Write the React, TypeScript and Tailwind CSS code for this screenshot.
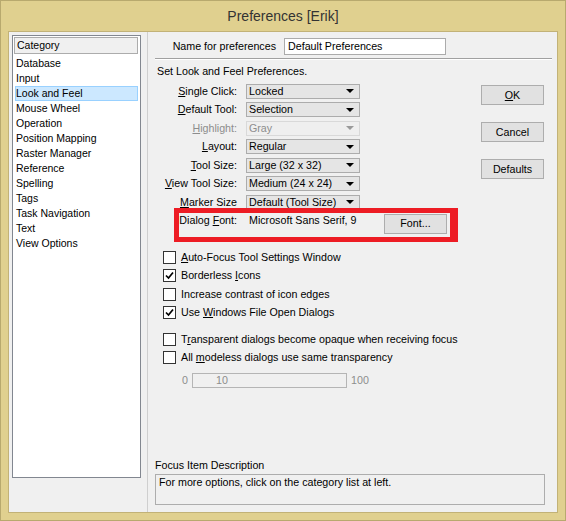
import type { ReactNode } from "react";

const categories = [
  "Database",
  "Input",
  "Look and Feel",
  "Mouse Wheel",
  "Operation",
  "Position Mapping",
  "Raster Manager",
  "Reference",
  "Spelling",
  "Tags",
  "Task Navigation",
  "Text",
  "View Options",
];

const U = ({ children }: { children: ReactNode }) => <span className="underline underline-offset-[1px]">{children}</span>;

const Arrow = ({ disabled }: { disabled?: boolean }) => (
  <svg width="8" height="4" viewBox="0 0 8 4">
    <polygon points="0,0 8,0 4,4" fill={disabled ? "#9a9a9a" : "#000"} />
  </svg>
);

const Select = ({ value, disabled }: { value: string; disabled?: boolean }) => (
  <div
    className={
      disabled
        ? "ml-[9px] flex h-[15px] w-[114px] items-center justify-between border border-[#d9d9d9] bg-[#efefef] pl-[2px] pr-[5px] text-[#8d8d8d]"
        : "ml-[9px] flex h-[15px] w-[114px] items-center justify-between border border-[#acacac] bg-[#e5e5e5] pl-[2px] pr-[5px]"
    }
  >
    <span>{value}</span>
    <Arrow disabled={disabled} />
  </div>
);

const FormRow = ({ label, value, disabled }: { label: ReactNode; value: string; disabled?: boolean }) => (
  <div className="flex h-[18.5px] items-center">
    <div className={disabled ? "w-[80px] text-right text-[#8d8d8d]" : "w-[80px] text-right"}>{label}</div>
    <Select value={value} disabled={disabled} />
  </div>
);

const Check = ({ checked, children }: { checked?: boolean; children: ReactNode }) => (
  <div className="ml-[6px] flex h-[18.5px] items-center">
    <div className="flex h-[13px] w-[13px] items-center justify-center border border-[#333] bg-white">
      {checked && (
        <svg width="11" height="11" viewBox="0 0 11 11">
          <path d="M2 5.5 L4.5 8 L9 2.5" stroke="#000" strokeWidth="1.7" fill="none" />
        </svg>
      )}
    </div>
    <span className="ml-[5px]">{children}</span>
  </div>
);

const Button = ({ children }: { children: ReactNode }) => (
  <div className="flex h-[20px] w-[63px] items-center justify-center border border-[#adadad] bg-[#e1e1e1]">
    {children}
  </div>
);

export default function App() {
  return (
    <div className="relative flex h-[521px] w-[566px] flex-col border border-[#b8a96e] bg-[#e0d08f] font-['Liberation_Sans',Arial,sans-serif] text-[10.7px] leading-[13px] text-black">
      <div className="flex h-[30px] items-center justify-center text-[14px] text-[#333]">Preferences [Erik]</div>

      <div className="mx-[7px] mb-[7px] flex flex-1 border border-[#c2b277] bg-[#f0f0f0]">
        {/* category list */}
        <div className="w-[138px]">
          <div className="ml-[3px] mt-[3px] h-[443px] w-[129px] border border-[#828790] bg-white">
            <div className="ml-px mt-px flex h-[17px] w-[124px] items-center border border-[#acacac] bg-[#f0f0f0] pl-[2px] text-[10.5px]">
              Category
            </div>
            <div className="mt-[1.5px] text-[10.5px]">
              {categories.map((c) => (
                <div
                  key={c}
                  className={
                    c === "Look and Feel"
                      ? "mx-[2px] flex h-[15px] items-center border border-[#99d1ff] bg-[#cce8ff]"
                      : "mx-[2px] flex h-[15px] items-center border border-transparent"
                  }
                >
                  {c}
                </div>
              ))}
            </div>
          </div>
        </div>
        <div className="w-px bg-[#cfcfcf]" />

        {/* settings */}
        <div className="flex flex-1 flex-col pb-[7px]">
          <div className="mt-[6px] flex items-center">
            <div className="w-[136px] pr-[8px] text-right">Name for preferences</div>
            <div className="flex h-[17px] w-[162px] items-center border border-[#ababab] bg-white pl-[3px]">
              Default Preferences
            </div>
          </div>
          <div className="ml-[7px] mr-[5px] mt-[3px] border-b border-t border-b-white border-t-[#a0a0a0]" />
          <div className="mt-[5px] pl-[9px]">Set Look and Feel Preferences.</div>

          <div className="mt-[4px] flex pl-[9px] pr-[13px]">
            <div className="flex-1">
              <FormRow label={<><U>S</U>ingle Click:</>} value="Locked" />
              <FormRow label={<><U>D</U>efault Tool:</>} value="Selection" />
              <FormRow label={<><U>H</U>ighlight:</>} value="Gray" disabled />
              <FormRow label={<><U>L</U>ayout:</>} value="Regular" />
              <FormRow label={<><U>T</U>ool Size:</>} value="Large (32 x 32)" />
              <FormRow label={<><U>V</U>iew Tool Size:</>} value="Medium (24 x 24)" />
              <FormRow label={<><U>M</U>arker Size</>} value="Default (Tool Size)" />
              <div className="flex h-[18.5px] items-center">
                <div className="w-[80px] text-right">
                  Dialog <U>F</U>ont:
                </div>
                <div className="ml-[12px] w-[135px]">Microsoft Sans Serif, 9</div>
                <div className="mt-[6px]">
                  <Button>Font...</Button>
                </div>
              </div>

              <div className="mt-[18px]">
                <Check>
                  <U>A</U>uto-Focus Tool Settings Window
                </Check>
                <Check checked>
                  Borderless <U>I</U>cons
                </Check>
                <Check>Increase contrast of icon edges</Check>
                <Check checked>
                  Use <U>W</U>indows File Open Dialogs
                </Check>
              </div>
              <div className="mt-[8px]">
                <Check>
                  T<U>r</U>ansparent dialogs become opaque when receiving focus
                </Check>
                <Check>
                  All <U>m</U>odeless dialogs use same transparency
                </Check>
              </div>
              <div className="mt-[6px] flex items-center text-[#8d8d8d]">
                <span className="ml-[25px] w-[10px]">0</span>
                <div className="flex h-[15px] w-[155px] items-center border border-[#b5b5b5] bg-[#f0f0f0] pl-[23px]">
                  10
                </div>
                <span className="ml-[4px]">100</span>
              </div>
            </div>

            <div className="flex w-[63px] flex-col gap-[17px] pt-[3px]">
              <Button>
                <U>O</U>K
              </Button>
              <Button>Cancel</Button>
              <Button>Defaults</Button>
            </div>
          </div>

          <div className="mt-auto pl-[7px]">
            <div>Focus Item Description</div>
            <div className="mt-[2.5px] h-[31px] w-[390px] border border-[#adadad] pl-[3px] pt-px">
              For more options, click on the category list at left.
            </div>
          </div>
        </div>
      </div>

      {/* red annotation rectangle */}
      <div className="pointer-events-none absolute left-[173px] top-[207px] h-[34px] w-[284px] border-[5px] border-r-[8px] border-[#ed1c24]" />
    </div>
  );
}
